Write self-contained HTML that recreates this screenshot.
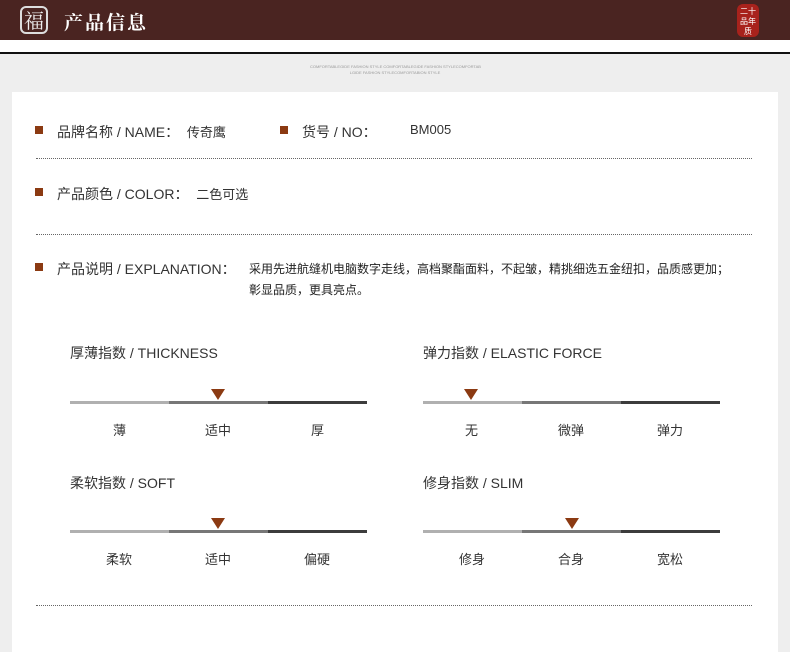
<!DOCTYPE html>
<html><head><meta charset="utf-8"><style>
*{margin:0;padding:0;box-sizing:border-box}
body{width:790px;height:633px;overflow:hidden;background:#eeeeee;font-family:"Liberation Sans","Noto Sans CJK SC",sans-serif;color:#333;position:relative}
.hd{position:absolute;left:0;top:0;width:790px;height:40px;background:#4a2421}
.wb{position:absolute;left:0;top:40px;width:790px;height:12px;background:#fff}
.bl{position:absolute;left:0;top:52px;width:790px;height:1.5px;background:#111}
.card{position:absolute;left:12px;top:92px;width:766px;height:560px;background:#fff}
.a{position:absolute;white-space:nowrap}
.sq{position:absolute;width:8px;height:8px;background:#8b3a12}
.t{font-size:14px;color:#333}
.d{position:absolute;left:36px;width:716px;border-top:1px dotted #666}
.tr{position:absolute;height:3px;width:99px}
.tri{position:absolute;width:0;height:0;border-left:7px solid transparent;border-right:7px solid transparent;border-top:11px solid #8b3a12}
.s{font-size:13px}
</style></head><body>
<div class="hd"></div>
<div class="a" style="left:20px;top:6px;width:28px;height:28px;border:2px solid #ddd;border-radius:6px;color:#eee;font-size:20px;line-height:24px;text-align:center;font-family:'Noto Serif CJK SC',serif">福</div>
<div class="a" style="left:64px;top:8px;color:#fff;font-size:19px;font-family:'Noto Serif CJK SC',serif;font-weight:bold;letter-spacing:2px">产品信息</div>
<div class="a" style="left:737px;top:4px;width:22px;height:33px;background:#a8221c;border-radius:6px;color:#fff;font-size:8px;line-height:10px;text-align:center;padding-top:3px">二十<br>品年<br>质</div>
<div class="wb"></div><div class="bl"></div>
<div class="a" style="left:310px;top:64px;font-size:4px;color:#999;line-height:6px;text-align:center;width:170px">COMFORTABLEGIDE FASHION STYLE COMFORTABLEGIDE FASHION STYLECOMFORTAB<br>LGIDE FASHION STYLECOMFORTABION STYLE</div>
<div class="card"></div>
<div class="sq" style="left:35px;top:126px"></div>
<div class="a t" style="left:57px;top:122px">品牌名称 / NAME：&nbsp;&nbsp;<span style="font-size:13px">传奇鹰</span></div>
<div class="sq" style="left:280px;top:126px"></div>
<div class="a t" style="left:302px;top:122px">货号 / NO：</div>
<div class="a t" style="left:410px;top:122px;font-size:13px">BM005</div>
<div class="d" style="top:158px"></div>
<div class="sq" style="left:35px;top:188px"></div>
<div class="a t" style="left:57px;top:184px">产品颜色 / COLOR：&nbsp;&nbsp;<span style="font-size:13px">二色可选</span></div>
<div class="d" style="top:234px"></div>
<div class="sq" style="left:35px;top:263px"></div>
<div class="a t" style="left:57px;top:259px">产品说明 / EXPLANATION：</div>
<div class="a" style="left:249px;top:259px;font-size:12px;line-height:21px;color:#222">采用先进航缝机电脑数字走线，高档聚酯面料，不起皱，精挑细选五金纽扣，品质感更加；<br>彰显品质，更具亮点。</div>

<div class="a t" style="left:70px;top:343px">厚薄指数 / THICKNESS</div>
<div class="tri" style="left:211px;top:389px"></div>
<div class="tr" style="left:70px;top:401px;background:#b0b0b0"></div><div class="tr" style="left:169px;top:401px;background:#777"></div><div class="tr" style="left:268px;top:401px;background:#3c3c3c"></div>
<div class="a s" style="left:113px;top:420px">薄</div><div class="a s" style="left:205px;top:420px">适中</div><div class="a s" style="left:311px;top:420px">厚</div>

<div class="a t" style="left:423px;top:343px">弹力指数 / ELASTIC FORCE</div>
<div class="tri" style="left:464px;top:389px"></div>
<div class="tr" style="left:423px;top:401px;background:#b0b0b0"></div><div class="tr" style="left:522px;top:401px;background:#777"></div><div class="tr" style="left:621px;top:401px;background:#3c3c3c"></div>
<div class="a s" style="left:465px;top:420px">无</div><div class="a s" style="left:558px;top:420px">微弹</div><div class="a s" style="left:657px;top:420px">弹力</div>

<div class="a t" style="left:70px;top:473px">柔软指数 / SOFT</div>
<div class="tri" style="left:211px;top:518px"></div>
<div class="tr" style="left:70px;top:530px;background:#b0b0b0"></div><div class="tr" style="left:169px;top:530px;background:#777"></div><div class="tr" style="left:268px;top:530px;background:#3c3c3c"></div>
<div class="a s" style="left:106px;top:549px">柔软</div><div class="a s" style="left:205px;top:549px">适中</div><div class="a s" style="left:304px;top:549px">偏硬</div>

<div class="a t" style="left:423px;top:473px">修身指数 / SLIM</div>
<div class="tri" style="left:565px;top:518px"></div>
<div class="tr" style="left:423px;top:530px;background:#b0b0b0"></div><div class="tr" style="left:522px;top:530px;background:#777"></div><div class="tr" style="left:621px;top:530px;background:#3c3c3c"></div>
<div class="a s" style="left:459px;top:549px">修身</div><div class="a s" style="left:558px;top:549px">合身</div><div class="a s" style="left:657px;top:549px">宽松</div>

<div class="d" style="top:605px"></div>
</body></html>
